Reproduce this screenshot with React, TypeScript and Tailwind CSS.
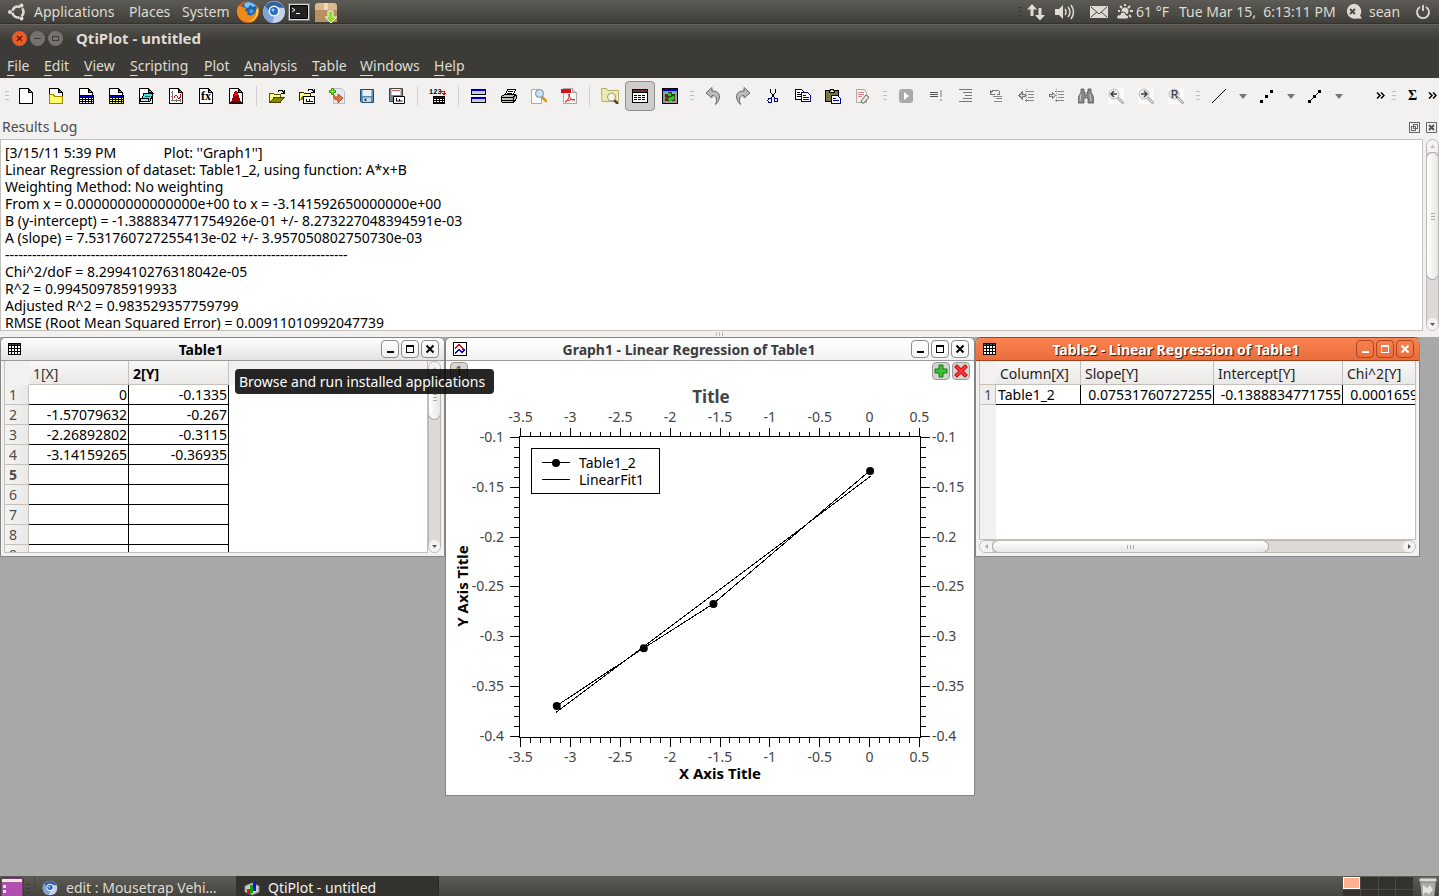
import type { ReactNode } from "react";
import clsx from "clsx";

function Icon({ children, w = 16, h = 16, smooth = false }: { children: ReactNode; w?: number; h?: number; smooth?: boolean }) {
  return (
    <svg
      width={w}
      height={h}
      viewBox={`0 0 ${w} ${h}`}
      fill="none"
      shapeRendering={smooth ? "auto" : "crispEdges"}
      aria-hidden="true"
      className="block shrink-0"
    >
      {children}
    </svg>
  );
}

/* ---------- toolbar icons ---------- */

function Page() {
  return (
    <>
      <path d="M1.5.5h9l4 4v11h-13z" fill="#fff" stroke="#000" />
      <path d="M10.5 1v3.5h4z" fill="#888" stroke="#000" />
    </>
  );
}

function GridPage({ fill }: { fill: string }) {
  return (
    <Icon>
      <Page />
      <path d="M1 7h15v9H1z" fill="#000" />
      <path d="M2 8h13v1H2z" fill="#00c" />
      <path d="M2 10.5h13M2 12.5h13M2 14.5h13" stroke={fill} strokeDasharray="2 1" />
    </Icon>
  );
}

const NewIcon = () => (
  <Icon>
    <Page />
  </Icon>
);

const NewFolderIcon = () => (
  <Icon>
    <Page />
    <path d="M1.5 6.5h4l1 2h8v7h-13z" fill="#ff6" stroke="#a58800" />
    <path d="M3 10.5h10M3 12.5h10" stroke="#ffc" strokeDasharray="1 1" />
  </Icon>
);

const NoteIcon = () => (
  <Icon>
    <Page />
    <path d="M6 5.500h9L12 13H3z" fill="#5dd" stroke="#000" />
    <path d="M7 8.500h5" stroke="#066" />
    <path d="M2 10.500h8v3H3z" fill="#9ee" stroke="#000" />
  </Icon>
);

const GraphPageIcon = () => (
  <Icon>
    <Page />
    <path d="M4.5 3v10M3 12.5h10M3 4.5h2M3 8.5h2M8.5 11v3M12.5 11v3" stroke="#777" />
    <path d="M5.500 10.500l2-3h1l2 3 2-1v-4" stroke="#e00" />
  </Icon>
);

const FunctionIcon = () => (
  <Icon>
    <Page />
    <text x="3" y="12" fontFamily="Liberation Serif" fontSize="12" fontWeight="bold" fill="#000">fx</text>
  </Icon>
);

const SurfaceIcon = () => (
  <Icon>
    <Page />
    <path d="M2 15c3-2 3-11 5-12h2c2 2 2 10 5 12z" fill="#900" />
    <path d="M6 8l1-4h2l1 4z" fill="#e00" />
    <path d="M2 14h12v1H2z" fill="#400" />
  </Icon>
);

const OpenIcon = () => (
  <Icon>
    <path d="M.5 13.5v-8h4l1 1h6v3" fill="#ff8" stroke="#550" />
    <path d="M1 14.5l4-5h10l-4 5z" fill="#880" stroke="#440" />
    <path d="M9 3.5l1-1h3l2 2M15.5 2v4M12 5.5h3" stroke="#000" />
  </Icon>
);

const TemplateIcon = () => (
  <Icon>
    <path d="M.5 12.5v-8h4l1 1h6v2" fill="#ff8" stroke="#220" />
    <path d="M1 12l2-4h9v4z" fill="#880" />
    <path d="M9 2.5l1-1h3l2 2M15.5 1v4M12 4.5h3" stroke="#000" />
    <path d="M4.5 8.5h11v7h-11z" fill="#fff" stroke="#000" />
    <path d="M7.5 11v2h6M10.5 11v2" stroke="#000" />
  </Icon>
);

const ImportIcon = () => (
  <Icon smooth>
    <path d="M4.5.5h8l3 3v12h-11z" fill="#e4eaf2" stroke="#b3bfce" />
    <path d="M5 7c1 2 2 2 4 2V6l5 4-5 5v-3c-3 0-5-1-4-5z" fill="#e8703a" stroke="#a33c10" strokeWidth=".8" />
    <path d="M2.5.5h2v2h2v2h-2v2h-2v-2h-2v-2h2z" fill="#8e4" stroke="#390" />
  </Icon>
);

const SaveIcon = () => (
  <Icon smooth>
    <path d="M1.5 1.5h13v13h-12l-1-1z" fill="#5b8bb0" stroke="#204a70" />
    <path d="M3.5 2h9v6h-9z" fill="#e8f0f6" />
    <path d="M4 9.5h8V14H4z" fill="#cfd9e2" />
    <path d="M5.5 10.5h2V13h-2z" fill="#204a70" />
  </Icon>
);

const SaveAsIcon = () => (
  <Icon smooth>
    <path d="M.5.5h13v13H.5z" fill="#7d8790" stroke="#444" />
    <path d="M2.5 1h9v6h-9z" fill="#fff" />
    <path d="M3 2.5h8" stroke="#d55" />
    <path d="M4.5 8.5h11v7h-11z" fill="#fff" stroke="#000" />
    <path d="M7.5 10v3h6M10.5 11v2" stroke="#000" />
  </Icon>
);

const AsciiIcon = () => (
  <Icon w={18}>
    <text x="0" y="6" fontFamily="Liberation Mono" fontSize="7" fontWeight="bold" fill="#000">123</text>
    <path d="M12 3.5h3v3M13 5.5h4M14 6.5h2" stroke="#e00" />
    <path d="M4 8h12v8H4z" fill="#000" />
    <path d="M5 9h10v1H5z" fill="#00c" />
    <path d="M5 11.5h10M5 13.5h10" stroke="#fff" strokeDasharray="2 1" />
  </Icon>
);

const LogRowsIcon = () => (
  <Icon>
    <path d="M.5 1.5h14v5H.5zM.5 9.5h14v5H.5z" fill="#ccd" stroke="#000" />
    <path d="M1 2.5h13M1 10.5h13" stroke="#00f" />
  </Icon>
);

const PrintIcon = () => (
  <Icon>
    <path d="M4.5 6.5l2-5h8l-2 5z" fill="#fff" stroke="#000" />
    <path d="M7 3.5h5M6 5.5h5" stroke="#000" />
    <path d="M.5 8.5l3-2h11l1 1v3l-3 4h-11l-1-1z" fill="#bbb" stroke="#000" />
    <path d="M1 9.5h11l3-3M1 12.5h11M12.5 9v5" stroke="#000" />
    <path d="M7 11h3v1H7z" fill="#dd0" />
  </Icon>
);

const PreviewIcon = () => (
  <Icon smooth>
    <path d="M.5 1.5h7l3 3v11H.5z" fill="#fff" stroke="#9ab0c8" />
    <path d="M11 9l4 4" stroke="#d99a22" strokeWidth="2.6" strokeLinecap="round" />
    <circle cx="8.5" cy="5.5" r="4" fill="#c6e2f6" stroke="#789" />
  </Icon>
);

const PdfIcon = () => (
  <Icon smooth>
    <path d="M2.5.5h9l4 4v11h-13z" fill="#f7f7f7" stroke="#aaa" />
    <path d="M11.5.5v4h4" fill="#ddd" stroke="#999" />
    <path d="M0 1h10v4H0z" fill="#d11" />
    <path d="M4 14c3-1 6-8 4-8-1 0 0 6 6 6-3-1-7 0-10 2z" stroke="#d22" />
  </Icon>
);

const ExplorerIcon = () => (
  <Icon w={18} smooth>
    <path d="M.5.5h5l1 2h11v11H1z" fill="#eeeab0" stroke="#b5ae6c" />
    <path d="M13 12l4 4" stroke="#54431c" strokeWidth="2.5" />
    <circle cx="10.5" cy="9" r="4" fill="#f7f7dd" stroke="#998" />
  </Icon>
);

const ResultsLogIcon = () => (
  <Icon>
    <path d="M.5 1.5h15v13H.5z" fill="#fff" stroke="#000" />
    <path d="M1 3h14" stroke="#733" strokeWidth="2" />
    <path d="M1 4.5h14" stroke="#000" />
    <path d="M2 7.5h12M2 9.5h12M2 11.5h12" stroke="#000" strokeDasharray="3 1" />
  </Icon>
);

const ImageIcon = () => (
  <Icon>
    <path d="M.5.5h15v15H.5z" fill="#999" stroke="#000" />
    <path d="M1 1h14v2H1z" fill="#00c" />
    <path d="M3 4h10v9H3z" fill="#431" />
    <path d="M3 4h3v2H3zM10 4h3v2h-3z" fill="#6bd" />
    <path d="M6 5h3v3H6zM5 11l3-2 3-1 2 1-1 3-4 1z" fill="#1c2" />
    <path d="M3 9h2v2H3z" fill="#d22" />
  </Icon>
);

const UndoIcon = () => (
  <Icon h={20} smooth>
    <path d="M7 1.5L1 7l6 5V9.5c4 0 6 3 3.5 9C16 14 16.5 4.5 7 5z" fill="#bbb" stroke="#666" strokeLinejoin="round" />
  </Icon>
);

const RedoIcon = () => (
  <Icon h={20} smooth>
    <path d="M9 1.5L15 7l-6 5V9.5c-4 0-6 3-3.5 9C0 14-.5 4.5 9 5z" fill="#bbb" stroke="#666" strokeLinejoin="round" />
  </Icon>
);

const CutIcon = () => (
  <Icon>
    <path d="M5.5 1v3l4 6M10.5 1v3l-4 6" stroke="#000" />
    <circle cx="5" cy="12.5" r="2" stroke="#00a" />
    <circle cx="11" cy="12" r="2" stroke="#00a" />
  </Icon>
);

const CopyIcon = () => (
  <Icon>
    <path d="M.5 1.5h6l2 2v8h-8z" fill="#fff" stroke="#000" />
    <path d="M2 4.5h3M2 6.5h5M2 8.5h5" stroke="#000" />
    <path d="M6.5 4.5h6l3 3v6h-9z" fill="#fff" stroke="#009" />
    <path d="M8 7.5h3M8 9.5h6M8 11.5h6" stroke="#009" />
  </Icon>
);

const PasteIcon = () => (
  <Icon>
    <path d="M.5 2.5h13v11H.5z" fill="#774" stroke="#000" />
    <path d="M4.5 4.5v-2h1v-1h3v1h1v2z" fill="#ee3" stroke="#000" />
    <path d="M6.5 7.5h6l3 3v5h-9z" fill="#fff" stroke="#009" />
    <path d="M8 10.5h3M8 12.5h6" stroke="#009" />
  </Icon>
);

const EraseIcon = () => (
  <Icon smooth>
    <path d="M1.5 1.5h8l2 3v10h-10z" fill="#fbeeee" stroke="#aaa" />
    <path d="M3 4.5h6M3 6.5h6M3 8.5h4" stroke="#d88" />
    <path d="M6 13l5-6 3 2-5 6H7z" fill="#e8e8e8" stroke="#666" />
  </Icon>
);

const RunIcon = () => (
  <Icon smooth>
    <rect x="1" y="1" width="14" height="14" rx="3" fill="#aaa" />
    <path d="M6 4l5 4-5 4z" fill="#fff" />
  </Icon>
);

const WarnRowsIcon = () => (
  <Icon>
    <path d="M2 4.5h8M2 6.5h8M2 8.5h8" stroke="#555" />
    <path d="M13 2v7M13 11v2" stroke="#b5b5b5" strokeWidth="2" />
  </Icon>
);

const IndentRowsIcon = () => (
  <Icon>
    <path d="M1 1.5h13M5 4.5h9M7 7.5h7M5 10.5h9M1 13.5h13" stroke="#777" />
  </Icon>
);

const UncommentIcon = () => (
  <Icon>
    <path d="M2.5 2v4h4M3 5l2-3h5l1 1v3H9" stroke="#777" />
    <path d="M5 8.5h9M8 10.5h6M6 13.5h8" stroke="#888" />
  </Icon>
);

function ShiftIcon({ right = false }: { right?: boolean }) {
  return (
    <Icon w={17}>
      {right ? (
        <path d="M7.5 7.5l-3-3v2h-3v2h3v2z" fill="#ddd" stroke="#777" />
      ) : (
        <path d="M1 7.5l3-3v2h3v2H4v2z" fill="#ddd" stroke="#777" />
      )}
      <path d="M7 3.5h9M10 6.5h6M10 9.5h6M7 12.5h9" stroke="#888" />
      <path d="M8.5 1v14" stroke="#999" strokeDasharray="1 1" />
    </Icon>
  );
}

const BinocularsIcon = () => (
  <Icon smooth>
    <path d="M3 1h3v3h1v3h2V4h1V1h3v3l3 6v5h-6v-5H6v5H0v-5l3-6z" fill="#888" stroke="#555" strokeWidth=".8" />
    <path d="M3 6l-1 7M12 6l1 7" stroke="#ccc" />
  </Icon>
);

function FindIcon({ children }: { children: ReactNode }) {
  return (
    <Icon smooth>
      <path d="M0 0h16v16H0z" fill="#fafafa" />
      <path d="M9.5 9.5l5 5" stroke="#aaa" strokeWidth="3" strokeLinecap="round" />
      <path d="M9.5 9.5l5 5" stroke="#eee" strokeLinecap="round" />
      <circle cx="6" cy="6" r="5" fill="#eee" stroke="#bbb" />
      {children}
    </Icon>
  );
}

const LineIcon = () => (
  <Icon>
    <path d="M1 15L15 1" stroke="#000" />
  </Icon>
);

const ScatterIcon = () => (
  <Icon>
    <path d="M1 12h3v3H1zM6 7h3v3H6zM11 2h3v3h-3z" fill="#000" />
  </Icon>
);

const LineScatterIcon = () => (
  <Icon>
    <path d="M1 12h3v3H1zM6 7h3v3H6zM11 2h3v3h-3z" fill="#000" />
    <path d="M2 14L13 3" stroke="#000" />
  </Icon>
);

function Tool({ label, pressed = false, children }: { label: string; pressed?: boolean; children: ReactNode }) {
  return (
    <button
      type="button"
      title={label}
      aria-label={label}
      className={clsx(
        "flex h-[30px] w-[30px] shrink-0 items-center justify-center",
        pressed && "rounded border border-[#8f8d8a] bg-[#cecdcb]",
      )}
    >
      {children}
    </button>
  );
}

function Sep() {
  return (
    <div className="flex w-[11px] shrink-0 justify-center">
      <div className="h-5 w-px bg-[#d3d1cf]" />
    </div>
  );
}

function Grip() {
  return (
    <div className="flex w-[13px] shrink-0 flex-col items-center gap-[3px]">
      <div className="h-px w-1 bg-[#c2c0be]" />
      <div className="h-px w-1 bg-[#c2c0be]" />
      <div className="h-px w-1 bg-[#c2c0be]" />
    </div>
  );
}

function DropArrow() {
  return (
    <button type="button" aria-label="More line styles" className="flex w-[18px] shrink-0 justify-center">
      <Icon w={8} h={6} smooth>
        <path d="M0 1h8L4 6z" fill="#777" />
      </Icon>
    </button>
  );
}

function Chevrons() {
  return (
    <button type="button" aria-label="Show more" className="flex w-[14px] shrink-0 justify-center">
      <Icon w={9} h={7} smooth>
        <path d="M1 .5l3 3-3 3M5 .5l3 3-3 3" stroke="#000" strokeWidth="1.5" />
      </Icon>
    </button>
  );
}

function Toolbar() {
  return (
    <div className="flex h-[37px] shrink-0 items-center overflow-hidden pb-[2px]">
      <div className="-mr-0.5 flex">
        <Grip />
      </div>
      <Tool label="New project"><NewIcon /></Tool>
      <Tool label="New folder"><NewFolderIcon /></Tool>
      <Tool label="New table"><GridPage fill="#fff" /></Tool>
      <Tool label="New matrix"><GridPage fill="#ff6" /></Tool>
      <Tool label="New note"><NoteIcon /></Tool>
      <Tool label="New graph"><GraphPageIcon /></Tool>
      <Tool label="New function plot"><FunctionIcon /></Tool>
      <Tool label="New surface plot"><SurfaceIcon /></Tool>
      <Sep />
      <Tool label="Open"><OpenIcon /></Tool>
      <Tool label="Open template"><TemplateIcon /></Tool>
      <Tool label="Append project"><ImportIcon /></Tool>
      <Tool label="Save"><SaveIcon /></Tool>
      <Tool label="Save as template"><SaveAsIcon /></Tool>
      <Sep />
      <Tool label="Import ASCII"><AsciiIcon /></Tool>
      <Sep />
      <Tool label="Duplicate window"><LogRowsIcon /></Tool>
      <Tool label="Print"><PrintIcon /></Tool>
      <Tool label="Print preview"><PreviewIcon /></Tool>
      <Tool label="Export PDF"><PdfIcon /></Tool>
      <Sep />
      <Tool label="Project explorer"><ExplorerIcon /></Tool>
      <Tool label="Results log" pressed><ResultsLogIcon /></Tool>
      <Tool label="Add image"><ImageIcon /></Tool>
      <Grip />
      <Tool label="Undo"><UndoIcon /></Tool>
      <Tool label="Redo"><RedoIcon /></Tool>
      <Tool label="Cut"><CutIcon /></Tool>
      <Tool label="Copy"><CopyIcon /></Tool>
      <Tool label="Paste"><PasteIcon /></Tool>
      <Tool label="Delete selection"><EraseIcon /></Tool>
      <Grip />
      <Tool label="Execute"><RunIcon /></Tool>
      <Tool label="Execute all"><WarnRowsIcon /></Tool>
      <Tool label="Comment"><IndentRowsIcon /></Tool>
      <Tool label="Uncomment"><UncommentIcon /></Tool>
      <Tool label="Decrease indent"><ShiftIcon /></Tool>
      <Tool label="Increase indent"><ShiftIcon right /></Tool>
      <Tool label="Find"><BinocularsIcon /></Tool>
      <Tool label="Find previous">
        <FindIcon>
          <path d="M9 6H4M6 3L3 6l3 3" stroke="#444" strokeWidth="1.5" />
        </FindIcon>
      </Tool>
      <Tool label="Find next">
        <FindIcon>
          <path d="M3 6h5M6 3l3 3-3 3" stroke="#444" strokeWidth="1.5" />
        </FindIcon>
      </Tool>
      <Tool label="Replace">
        <FindIcon>
          <text x="3" y="10" fontFamily="Liberation Sans" fontSize="10" fontWeight="bold" fill="#444">R</text>
        </FindIcon>
      </Tool>
      <Grip />
      <Tool label="Line"><LineIcon /></Tool>
      <DropArrow />
      <Tool label="Scatter"><ScatterIcon /></Tool>
      <DropArrow />
      <Tool label="Line and symbol"><LineScatterIcon /></Tool>
      <DropArrow />
      <div className="flex-1" />
      <Chevrons />
      <Grip />
      <button type="button" aria-label="Column statistics" className="w-[25px] shrink-0 font-['Liberation_Serif',serif] leading-5 font-bold text-black">
        Σ
      </button>
      <Chevrons />
    </div>
  );
}

/* ---------- desktop panel ---------- */

const FirefoxIcon = () => (
  <Icon w={24} h={24} smooth>
    <circle cx="12" cy="12" r="11" fill="#e0600f" />
    <circle cx="13" cy="9.5" r="8" fill="#1f5fa8" />
    <path d="M8 4c3-3 9-2 12 2l-3 1-3-2-2 3-3-1z" fill="#7cc4f0" />
    <path d="M14 9l4 1-2 4-3-2z" fill="#4f9cd8" />
    <path d="M2 5c1 2 3 1 5 2l3 1-1 3 3 1-1 2c3 3 8 1 9-4 1 6-3 12-8 12C5 22 1 16 1 11z" fill="#f08a1a" />
    <path d="M22 7c2 6-2 15-10 15 6-2 9-7 8-12z" fill="#fbd14b" />
  </Icon>
);

const ChromiumIcon = ({ size = 24 }: { size?: number }) => (
  <svg width={size} height={size} viewBox="0 0 24 24" aria-hidden="true" className="block shrink-0">
    <circle cx="12" cy="12" r="11" fill="#c3d4ea" />
    <path d="M3 6a11 11 0 0 1 19 2l-10-1-4 6z" fill="#35609f" />
    <path d="M3 6a11 11 0 0 0 7 17l3-8-5-2z" fill="#7fa3d4" />
    <circle cx="12" cy="11" r="5.5" fill="#f0f4fa" />
    <circle cx="12" cy="11" r="4" fill="#2869bd" />
    <circle cx="11" cy="10" r="1.5" fill="#9ccbf5" />
  </svg>
);

const TerminalIcon = () => (
  <Icon w={22} h={18} smooth>
    <path d="M.5.5h21v17H.5z" fill="#ddd" stroke="#777" />
    <path d="M2.5 2.5h17v13h-17z" fill="#222" stroke="#000" />
    <path d="M4 5l3 2-3 2M8 10.5h4" stroke="#fff" />
  </Icon>
);

const PackageIcon = () => (
  <Icon w={24} h={24} smooth>
    <path d="M1 5l2-2h18l2 2v17H1z" fill="#b8905f" />
    <path d="M1 5l2-2h18l2 2v5H1z" fill="#d9b88e" />
    <path d="M10 3h4v7h-4z" fill="#ecd9bd" />
    <path d="M14 11h5v6h4l-6 6-6-6h3z" fill="#9bd63c" stroke="#eef8dc" />
  </Icon>
);

const UbuntuIcon = () => (
  <Icon w={18} h={18} smooth>
    <circle cx="10" cy="9" r="5.5" stroke="#dfdbd2" strokeWidth="2.6" strokeDasharray="9.5 2" strokeDashoffset="4.7" />
    <circle cx="2" cy="9" r="2" fill="#dfdbd2" />
    <circle cx="13.5" cy="2.5" r="2" fill="#dfdbd2" />
    <circle cx="13.5" cy="15.5" r="2" fill="#dfdbd2" />
  </Icon>
);

function TopPanel() {
  return (
    <header className="flex h-6 shrink-0 items-center border-b border-[#33322e] bg-linear-to-b from-[#5c5b55] to-[#403f3a] text-[#dfdbd2]">
      <nav aria-label="Desktop" className="flex items-center pl-2">
        <UbuntuIcon />
        <button type="button" className="ml-2 w-[95px] text-left">Applications</button>
        <button type="button" className="w-[53px] text-left">Places</button>
        <button type="button" className="w-[54px] text-left">System</button>
      </nav>
      <div className="flex items-center">
        <button type="button" aria-label="Firefox" className="w-[26px]"><FirefoxIcon /></button>
        <button type="button" aria-label="Chromium" className="w-[26px]"><ChromiumIcon /></button>
        <button type="button" aria-label="Terminal" className="w-[26px]"><TerminalIcon /></button>
        <button type="button" aria-label="Software" className="w-6"><PackageIcon /></button>
      </div>
      <div className="flex-1" />
      <div className="flex items-center">
        <div className="mr-[5px] flex flex-col gap-[3px]">
          <div className="h-px w-1 bg-[#3a3934]" />
          <div className="h-px w-1 bg-[#3a3934]" />
          <div className="h-px w-1 bg-[#3a3934]" />
        </div>
        <button type="button" aria-label="Network" className="w-[27px]">
          <Icon w={18} h={18} smooth>
            <path d="M5 1L0 6.5h3.5V13h3V6.5H10zM13 17.5L8 12h3.5V5h3v7H18z" fill="#dfdbd2" />
          </Icon>
        </button>
        <button type="button" aria-label="Volume" className="w-9">
          <Icon w={22} h={18} smooth>
            <path d="M1 6h4l4-4v14l-4-4H1z" fill="#dfdbd2" />
            <path d="M11 6q2 3 0 6M14 4q4 5 0 10M17 2q5 7 0 14" stroke="#dfdbd2" strokeWidth="1.5" />
          </Icon>
        </button>
        <button type="button" aria-label="Mail" className="w-[27px]">
          <Icon w={18} h={14} smooth>
            <rect y="1" width="18" height="12" rx="1" fill="#dfdbd2" />
            <path d="M1 2l8 7 8-7M1 12l6-5M17 12l-6-5" stroke="#4b4a45" />
          </Icon>
        </button>
        <span className="flex w-[62px] items-center gap-[3px]">
          <Icon w={16} h={16} smooth>
            <circle cx="8" cy="7" r="3.5" fill="#dfdbd2" />
            <path d="M8 0v2M8 12v2M1 7h2M13 7h3M3 2l2 2M13 2l-2 2M12 11l2 2" stroke="#dfdbd2" strokeWidth="2" />
            <path d="M1 15a2 2 0 0 1 2-4 3 3 0 0 1 6 0 2 2 0 0 1 1 4z" fill="#dfdbd2" stroke="#4b4a45" />
          </Icon>
          61 °F
        </span>
        <time className="w-[166px] whitespace-pre">Tue Mar 15,  6:13:11 PM</time>
        <span className="flex w-[70px] items-center gap-[7px]">
          <Icon w={17} h={16} smooth>
            <path d="M7.5 0a7.5 7.5 0 1 0 4 14.5h5.5l-2-3A7.5 7.5 0 0 0 7.5 0z" fill="#dfdbd2" />
            <path d="M5 5l5 5M10 5l-5 5" stroke="#4b4a45" strokeWidth="2" />
          </Icon>
          sean
        </span>
        <button type="button" aria-label="Shut down" className="w-6">
          <Icon w={16} h={16} smooth>
            <path d="M5 3a6 6 0 1 0 6 0M8 1v6" stroke="#dfdbd2" strokeWidth="1.8" />
          </Icon>
        </button>
      </div>
    </header>
  );
}

const menus = [
  { name: "File", width: "w-[37px]" },
  { name: "Edit", width: "w-10" },
  { name: "View", width: "w-[46px]" },
  { name: "Scripting", width: "w-[74px]" },
  { name: "Plot", width: "w-10" },
  { name: "Analysis", width: "w-[68px]" },
  { name: "Table", width: "w-12" },
  { name: "Windows", width: "w-[74px]" },
  { name: "Help", width: "w-10" },
];

function AppHeader() {
  return (
    <>
      <div className="flex h-7 shrink-0 items-center border-t border-[#66655f] bg-linear-to-b from-[#55544e] to-[#3c3b37] to-60% pl-3">
        <div className="flex items-center gap-[3px]">
          <button type="button" aria-label="Close" className="rounded-full bg-[#ea5b26]">
            <Icon w={15} h={15} smooth>
              <path d="M5 5l5 5M10 5l-5 5" stroke="#4a1c0c" strokeWidth="1.2" />
            </Icon>
          </button>
          <button type="button" aria-label="Minimize" className="rounded-full bg-[#75736c]">
            <Icon w={15} h={15}>
              <path d="M4 7.5h7" stroke="#3c3b37" />
            </Icon>
          </button>
          <button type="button" aria-label="Maximize" className="rounded-full bg-[#75736c]">
            <Icon w={15} h={15}>
              <path d="M4.5 5.5h6v4h-6z" stroke="#3c3b37" />
            </Icon>
          </button>
        </div>
        <h1 className="ml-[13px] pb-[2px] text-[15px] leading-5 font-bold text-[#dfdbd2]">QtiPlot - untitled</h1>
      </div>
      <nav aria-label="Application" className="flex h-[26px] shrink-0 items-center bg-[#3c3b37] pt-[2px] pl-[7px] text-[#dfdbd2]">
        {menus.map((m) => (
          <button key={m.name} type="button" className={clsx(m.width, "text-left")}>
            <span className="underline underline-offset-4">{m.name[0]}</span>
            {m.name.slice(1)}
          </button>
        ))}
      </nav>
    </>
  );
}

/* ---------- scroll bars ---------- */

function VScroll({ thumb }: { thumb: string }) {
  return (
    <div className="flex w-[13px] shrink-0 flex-col overflow-hidden rounded-full border border-[#bcb8b4] bg-[#dcd9d7]">
      <div className="flex h-3 shrink-0 items-center justify-center bg-[#f4f3f2]">
        <Icon w={5} h={3} smooth><path d="M0 3h5L2.5 0z" fill="#bbb" /></Icon>
      </div>
      <div className={clsx("-mx-px flex shrink-0 flex-col items-center justify-center gap-0.5 rounded-full border border-[#a3a09c] bg-linear-to-r from-white to-[#e8e6e4]", thumb)}>
        <div className="h-px w-1 bg-[#aaa]" />
        <div className="h-px w-1 bg-[#aaa]" />
        <div className="h-px w-1 bg-[#aaa]" />
      </div>
      <div className="flex-1" />
      <div className="flex h-3 shrink-0 items-center justify-center rounded-t-md bg-[#f4f3f2]">
        <Icon w={5} h={3} smooth><path d="M0 0h5L2.5 3z" fill="#555" /></Icon>
      </div>
    </div>
  );
}

function HScroll() {
  return (
    <div className="flex h-[13px] shrink-0 overflow-hidden rounded-full border border-[#bcb8b4] bg-[#dcd9d7]">
      <div className="flex w-3 shrink-0 items-center justify-center bg-[#f4f3f2]">
        <Icon w={3} h={5} smooth><path d="M3 0v5L0 2.5z" fill="#aaa" /></Icon>
      </div>
      <div className="-my-px flex w-[277px] items-center justify-center gap-0.5 rounded-full border border-[#a3a09c] bg-linear-to-b from-white to-[#e8e6e4]">
        <div className="h-1 w-px bg-[#aaa]" />
        <div className="h-1 w-px bg-[#aaa]" />
        <div className="h-1 w-px bg-[#aaa]" />
      </div>
      <div className="flex-1" />
      <div className="flex w-3 shrink-0 items-center justify-center rounded-l-md bg-[#f4f3f2]">
        <Icon w={3} h={5} smooth><path d="M0 0v5l3-2.5z" fill="#555" /></Icon>
      </div>
    </div>
  );
}

/* ---------- results log ---------- */

const log = `[3/15/11 5:39 PM             Plot: ''Graph1'']
Linear Regression of dataset: Table1_2, using function: A*x+B
Weighting Method: No weighting
From x = 0.000000000000000e+00 to x = -3.141592650000000e+00
B (y-intercept) = -1.388834771754926e-01 +/- 8.273227048394591e-03
A (slope) = 7.531760727255413e-02 +/- 3.957050802750730e-03
----------------------------------------------------------------------------
Chi^2/doF = 8.299410276318042e-05
R^2 = 0.994509785919933
Adjusted R^2 = 0.983529357759799
RMSE (Root Mean Squared Error) = 0.00911010992047739`;

function ResultsLog() {
  return (
    <section className="flex h-[222px] shrink-0 flex-col">
      <div className="flex h-6 shrink-0 items-center justify-between px-[2px] text-[#4c4c4c]">
        <label htmlFor="log">Results Log</label>
        <div className="flex gap-[6px]">
          <button type="button" aria-label="Float">
            <Icon w={11} h={11}>
              <path d="M.5.5h10v10H.5zM4.5 2.5h4v4h-4zM2.5 4.5h4v4h-4z" stroke="#666" />
            </Icon>
          </button>
          <button type="button" aria-label="Close log">
            <Icon w={11} h={11} smooth>
              <path d="M.5.5h10v10H.5z" stroke="#666" />
              <path d="M3 3l5 5M8 3l-5 5" stroke="#555" strokeWidth="2" />
            </Icon>
          </button>
        </div>
      </div>
      <div className="flex h-48 gap-[3px]">
        <textarea
          id="log"
          readOnly
          value={log}
          className="flex-1 resize-none overflow-hidden border border-[#c4c1bd] bg-white py-1 pl-1 leading-[17px] whitespace-pre text-black outline-none"
        />
        <VScroll thumb="h-32" />
      </div>
      <div className="flex h-[6px] items-center justify-center gap-0.5">
        <div className="h-1 w-px bg-[#bbb]" />
        <div className="h-1 w-px bg-[#bbb]" />
        <div className="h-1 w-px bg-[#bbb]" />
      </div>
    </section>
  );
}

/* ---------- MDI windows ---------- */

const TableIcon = () => (
  <Icon w={13} h={12}>
    <path d="M0 0h13v12H0z" fill="#000" />
    <path d="M1 1.5h11" stroke="#357" strokeDasharray="2 1" />
    <path d="M1 4h11M1 7h11M1 10h11" stroke="#fff" strokeWidth="2" strokeDasharray="2 1" />
  </Icon>
);

const GraphIcon = () => (
  <Icon w={14} h={14}>
    <path d="M.5.5h13v13H.5z" fill="#fff" stroke="#000" />
    <path d="M2 6.5l4-4 5 5 1 1" stroke="#e00" />
    <path d="M5 2h2v2H5zM9 6h2v2H9z" fill="#e00" />
    <path d="M2 11.5l4-4 3 3 3-3" stroke="#00e" />
  </Icon>
);

const controls = [
  { label: "Minimize", d: "M5 11h7" },
  { label: "Maximize", d: "M4.5 4.5h7v7h-7zM4 5.5h8" },
  { label: "Close", d: "M4.5 4.5l7 7M11.5 4.5l-7 7" },
];

interface WindowProps {
  title: string;
  icon: ReactNode;
  active?: boolean;
  className: string;
  titleClass: string;
  children: ReactNode;
}

function MdiWindow({ title, icon, active = false, className, titleClass, children }: WindowProps) {
  return (
    <section
      className={clsx(
        "absolute flex flex-col overflow-hidden rounded-t-md border border-[#858585] bg-[#f2f1f0]",
        active && "border-t-[#a5421a]",
        className,
      )}
    >
      <div
        className={clsx(
          "flex h-[23px] shrink-0 items-center border-b pr-[5px] pl-[7px]",
          active ? "border-[#a5421a] bg-linear-to-b from-[#fb8350] to-[#e96d3d]" : "border-[#999]",
          titleClass,
        )}
      >
        {icon}
        <h2 className="flex-1 pt-[2px] text-center font-bold">{title}</h2>
        <div className="flex gap-[2px]">
          {controls.map((c) => (
            <button
              key={c.label}
              type="button"
              aria-label={c.label}
              className={clsx("h-[18px] w-[18px] rounded border", active ? "border-[#a9471f]" : "border-[#8c8c8c] bg-white/40")}
            >
              <Icon smooth={c.label === "Close"}>
                <path d={c.d} stroke={active ? "#fff" : "#000"} strokeWidth={c.label === "Maximize" ? 1 : 2} />
              </Icon>
            </button>
          ))}
        </div>
      </div>
      {children}
    </section>
  );
}

const headCell = "border-r border-b border-[#c4c1bd] bg-linear-to-b from-[#f8f8f7] to-[#ebe9e8] p-0 pt-[2px] pl-1 text-left";
const bodyCell = "overflow-hidden border-r border-b border-black bg-white p-0 pr-px text-right whitespace-nowrap text-black";

const table1 = [
  ["0", "-0.1335"],
  ["-1.57079632", "-0.267"],
  ["-2.26892802", "-0.3115"],
  ["-3.14159265", "-0.36935"],
  ["", ""],
  ["", ""],
  ["", ""],
  ["", ""],
  ["", ""],
];

function Table1Window() {
  return (
    <MdiWindow
      title="Table1"
      icon={<TableIcon />}
      className="top-0 left-0 h-[220px] w-[445px]"
      titleClass="bg-linear-to-b from-white to-[#e4e3e2] text-black"
    >
      <div className="flex min-h-0 flex-1 px-[3px] pb-[3px]">
        <div className="flex-1 overflow-hidden border border-t-0 border-[#c4c1bd] bg-white">
          <table className="w-full table-fixed border-separate border-spacing-0 leading-[19px]">
            <colgroup>
              <col className="w-6" />
              <col className="w-[100px]" />
              <col className="w-[100px]" />
              <col />
            </colgroup>
            <thead>
              <tr className="h-6">
                <td className="bg-[#f2f1f0] p-0" />
                <th className={clsx(headCell, "font-normal text-[#333]")}>1[X]</th>
                <th className={clsx(headCell, "font-bold text-black")}>2[Y]</th>
                <td className="bg-[#f2f1f0] p-0" />
              </tr>
            </thead>
            <tbody>
              {table1.map((row, i) => (
                <tr key={i} className="h-5">
                  <th
                    className={clsx(
                      "border-r border-b border-[#c4c1bd] bg-linear-to-r from-[#f4f4f3] to-[#ebe9e8] p-0 pl-1 text-left text-[#4c4c4c]",
                      i === 4 ? "font-bold" : "font-normal",
                    )}
                  >
                    {i + 1}
                  </th>
                  <td className={bodyCell}>{row[0]}</td>
                  <td className={bodyCell}>{row[1]}</td>
                  <td />
                </tr>
              ))}
            </tbody>
          </table>
        </div>
        <VScroll thumb="h-[46px]" />
      </div>
    </MdiWindow>
  );
}

function Table2Window() {
  return (
    <MdiWindow
      title="Table2 - Linear Regression of Table1"
      icon={<TableIcon />}
      active
      className="top-0 left-[975px] h-[220px] w-[445px]"
      titleClass="text-white text-shadow-[1px_1px_0_#4a1c0c]"
    >
      <div className="flex min-h-0 flex-1 flex-col px-[3px] pb-[3px]">
        <div className="min-h-0 flex-1 overflow-hidden border border-t-0 border-[#c4c1bd] bg-[linear-gradient(to_right,#f2f1f0_16px,#fff_16px)]">
          <table className="w-[496px] table-fixed border-separate border-spacing-0 leading-[19px]">
            <colgroup>
              <col className="w-4" />
              <col className="w-[85px]" />
              <col className="w-[133px]" />
              <col className="w-[129px]" />
              <col />
            </colgroup>
            <thead>
              <tr className="h-6">
                <td className="border-b border-[#c4c1bd] bg-[#f2f1f0] p-0" />
                {["Column[X]", "Slope[Y]", "Intercept[Y]", "Chi^2[Y]"].map((name) => (
                  <th key={name} className={clsx(headCell, "font-normal text-[#222]")}>{name}</th>
                ))}
              </tr>
            </thead>
            <tbody>
              <tr className="h-5">
                <th className="border-r border-b border-[#c4c1bd] bg-[#efedec] p-0 pl-1 text-left font-normal text-[#4c4c4c]">1</th>
                <td className="border-r border-b border-black bg-white p-0 pl-0.5 text-left text-black">Table1_2</td>
                <td className={bodyCell}>0.07531760727255</td>
                <td className={bodyCell}>-0.1388834771755</td>
                <td className={bodyCell}>0.00016598820552</td>
              </tr>
            </tbody>
          </table>
        </div>
        <HScroll />
      </div>
    </MdiWindow>
  );
}

/* ---------- chart ---------- */

const xTicks = [-3.5, -3, -2.5, -2, -1.5, -1, -0.5, 0, 0.5];
const yTicks = [-0.1, -0.15, -0.2, -0.25, -0.3, -0.35, -0.4];
const points = [
  [0, -0.1335],
  [-1.57079632, -0.267],
  [-2.26892802, -0.3115],
  [-3.14159265, -0.36935],
];

const xPos = (v: number) => 74.5 + (v + 3.5) * 99.75;
const yPos = (v: number) => 76.5 + (-0.1 - v) * 997;
const fit = (x: number) => 0.07531760727255 * x - 0.1388834771755;
const snap = (v: number) => Math.floor(v) + 0.5;

function Chart() {
  const minorX = Array.from({ length: 41 }, (_, i) => -3.5 + i * 0.1);
  const minorY = Array.from({ length: 31 }, (_, i) => -0.1 - i * 0.01);
  return (
    <svg width="528" height="434" viewBox="0 0 528 434" role="img" aria-label="Linear regression plot" className="block">
      <g stroke="#000" fill="none" shapeRendering="crispEdges">
        <rect x="73.5" y="75.5" width="401" height="301" />
        {minorX.map((v, i) => {
          const x = snap(xPos(v) + 0.01);
          const len = i % 5 === 0 ? 9 : 5;
          return <path key={i} d={`M${x} 76v${-len}M${x} 377v${len}`} />;
        })}
        {minorY.map((v, i) => {
          const y = snap(yPos(v) - 0.2);
          const len = i % 5 === 0 ? 10 : 6;
          return <path key={i} d={`M74 ${y}h${-len}M475 ${y}h${len - 1}`} />;
        })}
        <polyline points={points.map(([x, y]) => `${xPos(x)},${yPos(y)}`).join(" ")} />
        <line x1={xPos(0) + 1} y1={yPos(fit(0))} x2={xPos(-3.14159265)} y2={yPos(fit(-3.14159265))} />
        <rect x="85.5" y="87.5" width="128" height="45" fill="#fff" />
        <path d="M96 101.5h28M96 118.5h28" />
      </g>
      <circle cx="110" cy="102" r="4" />
      {points.map(([x, y]) => (
        <circle key={x} cx={xPos(x) + 0.5} cy={yPos(y)} r="4" />
      ))}
      <g fontSize="14" fill="#000">
        <text x="133" y="107">Table1_2</text>
        <text x="133" y="124">LinearFit1</text>
      </g>
      <g fontSize="14" fill="#444">
        {xTicks.map((v) => (
          <g key={v} textAnchor="middle">
            <text x={xPos(v)} y="61">{v}</text>
            <text x={xPos(v)} y="401">{v}</text>
          </g>
        ))}
        {yTicks.map((v) => (
          <g key={v}>
            <text x="58" y={Math.floor(yPos(v) - 0.2) + 5} textAnchor="end">{v}</text>
            <text x="486" y={Math.floor(yPos(v) - 0.2) + 5}>{v}</text>
          </g>
        ))}
      </g>
      <g fontWeight="bold" textAnchor="middle">
        <text x="265" y="42" fontSize="17" fill="#444">Title</text>
        <text x="274" y="418" fontSize="15">X Axis Title</text>
        <text transform="translate(22 225) rotate(-90)" fontSize="15">Y Axis Title</text>
      </g>
    </svg>
  );
}

const layerButton = "flex h-[18px] w-[18px] items-center justify-center rounded border border-[#9d9b98] bg-[#d6d4d2]";

function GraphWindow() {
  return (
    <MdiWindow
      title="Graph1 - Linear Regression of Table1"
      icon={<GraphIcon />}
      className="top-0 left-[445px] h-[459px] w-[530px]"
      titleClass="bg-linear-to-b from-white to-[#f3f3f3] text-[#3c3c3c]"
    >
      <div className="relative flex-1 bg-white">
        <Chart />
        <div className="absolute inset-x-1 top-px flex gap-[2px]">
          <button type="button" className={clsx(layerButton, "text-[#4c4c4c]")}>1</button>
          <div className="flex-1" />
          <button type="button" aria-label="Add layer" className={layerButton}>
            <Icon w={14} h={14} smooth>
              <path d="M5 1h4v4h4v4H9v4H5V9H1V5h4z" fill="#3ec13a" stroke="#177a17" />
            </Icon>
          </button>
          <button type="button" aria-label="Remove layer" className={layerButton}>
            <Icon w={14} h={14} smooth>
              <path d="M3 3l8 8M11 3l-8 8" stroke="#a00" strokeWidth="4" strokeLinecap="square" />
              <path d="M3 3l8 8M11 3l-8 8" stroke="#f33" strokeWidth="2.5" strokeLinecap="square" />
            </Icon>
          </button>
        </div>
      </div>
    </MdiWindow>
  );
}

/* ---------- taskbar ---------- */

function Taskbar() {
  return (
    <footer className="h-5 shrink-0 overflow-hidden text-[#dfdbd2]">
      <div className="flex h-6 items-center bg-linear-to-b from-[#5c5b55] to-[#403f3a]">
        <button type="button" aria-label="Show desktop" className="w-[26px]">
          <Icon w={24} h={24} smooth>
            <rect x="1" y="2" width="22" height="22" rx="2" fill="#b14fb0" stroke="#333" />
            <path d="M2 3h20v3H2z" fill="#eeead8" />
            <path d="M3 9h3v3H3zM3 14h3v3H3z" fill="#f2e6f2" />
          </Icon>
        </button>
        <div className="flex w-2 flex-col gap-[3px]">
          <div className="h-px w-1 bg-[#3a3934]" />
          <div className="h-px w-1 bg-[#3a3934]" />
          <div className="h-px w-1 bg-[#3a3934]" />
        </div>
        <button type="button" className="flex h-full w-[202px] items-center gap-2 border-l border-[#4a4944] pl-[7px]">
          <ChromiumIcon size={16} />
          <span className="whitespace-nowrap">edit : Mousetrap Vehi…</span>
        </button>
        <button type="button" className="flex h-full w-[203px] items-center gap-2 border-r border-[#2c2b28] bg-[#33322e] pl-2 text-[#f5f3ee]">
          <Icon w={16} h={16} smooth>
            <path d="M1 6l7-3 7 3v6l-7 3-7-3z" fill="#ccc" stroke="#888" />
            <path d="M3 9h4v5H3z" fill="#d11" />
            <path d="M6 5h3v8H6z" fill="#0a0" />
            <path d="M9 2l3-1v10H9z" fill="#11d" />
          </Icon>
          QtiPlot - untitled
        </button>
        <div className="flex-1" />
        <div className="grid h-[22px] w-[70px] grid-cols-4 gap-px bg-[#4b4a45]">
          <div className="border border-white bg-[#ffb08f]" />
          <div className="bg-[#33322e]" />
          <div className="bg-[#33322e]" />
          <div className="bg-[#33322e]" />
          <div className="bg-[#33322e]" />
          <div className="bg-[#33322e]" />
          <div className="bg-[#33322e]" />
          <div className="bg-[#33322e]" />
        </div>
        <button type="button" aria-label="Trash" className="ml-[5px] w-[21px]">
          <Icon w={20} h={22} smooth>
            <path d="M2 3h16l-2 19H4z" fill="#a9a9a5" />
            <path d="M5 8l4 3 3-3 3 5-4 4-4-2-2 4z" fill="#e4e4e0" />
            <rect x="1" y="1" width="18" height="4" rx="2" fill="#d9d9d5" stroke="#777" />
          </Icon>
        </button>
      </div>
    </footer>
  );
}

export default function App() {
  return (
    <div className="flex h-screen flex-col overflow-hidden bg-[#f2f1f0] font-['Noto_Sans',sans-serif] text-sm">
      <TopPanel />
      <AppHeader />
      <Toolbar />
      <ResultsLog />
      <main className="relative min-h-0 flex-1 overflow-hidden bg-[#a8a8a8]">
        <Table1Window />
        <GraphWindow />
        <Table2Window />
        <div role="tooltip" className="absolute top-8 left-[235px] w-[259px] rounded bg-black/85 px-1 py-[3px] leading-[19px] whitespace-nowrap text-white">
          Browse and run installed applications
        </div>
      </main>
      <Taskbar />
    </div>
  );
}
